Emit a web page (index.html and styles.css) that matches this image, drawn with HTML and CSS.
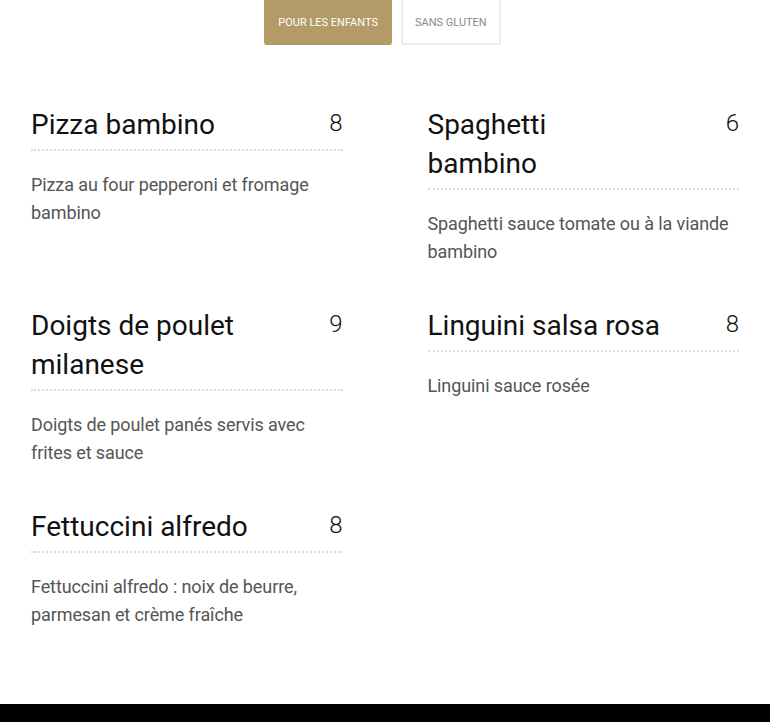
FILE: index.html
```html
<!DOCTYPE html>
<html>
<head>
    <title>Menu</title>
    <link rel="stylesheet" href="styles.css">
</head>
<body>
    <div class="tabs">
        <button class="tab tab-active">Pour les enfants</button>
        <button class="tab">Sans gluten</button>
    </div>

    <div class="menu">
        <div class="item">
            <div class="item-head">
                <h2 class="item-title">Pizza bambino</h2>
                <span class="item-price">8</span>
            </div>
            <p class="item-desc">Pizza au four pepperoni et fromage bambino</p>
        </div>
        <div class="item">
            <div class="item-head">
                <h2 class="item-title">Spaghetti bambino</h2>
                <span class="item-price">6</span>
            </div>
            <p class="item-desc">Spaghetti sauce tomate ou à la viande bambino</p>
        </div>
        <div class="item">
            <div class="item-head">
                <h2 class="item-title">Doigts de poulet milanese</h2>
                <span class="item-price">9</span>
            </div>
            <p class="item-desc">Doigts de poulet panés servis avec frites et sauce</p>
        </div>
        <div class="item">
            <div class="item-head">
                <h2 class="item-title">Linguini salsa rosa</h2>
                <span class="item-price">8</span>
            </div>
            <p class="item-desc">Linguini sauce rosée</p>
        </div>
        <div class="item">
            <div class="item-head">
                <h2 class="item-title">Fettuccini alfredo</h2>
                <span class="item-price">8</span>
            </div>
            <p class="item-desc">Fettuccini alfredo : noix de beurre, parmesan et crème fraîche</p>
        </div>
    </div>

    <footer class="footer"></footer>
</body>
</html>
```

FILE: styles.css
```css
body {
    margin: 0;
    font-family: Roboto, "Liberation Sans", sans-serif;
    background-color: white;
    color: #111;
}
.tabs {
    display: flex;
    justify-content: center;
    gap: 9px;
    padding-right: 5px;
    margin-top: -15px;
}
.tab {
    height: 60px;
    padding: 15px 12px 0 12px;
    border: 2px solid #ececec;
    border-radius: 3px;
    background-color: white;
    color: #8a8a8a;
    font-family: Roboto, "Liberation Sans", sans-serif;
    font-size: 11px;
    text-transform: uppercase;
    cursor: pointer;
}
.tab-active {
    background-color: #b39a66;
    border-color: #b39a66;
    color: white;
}
.menu {
    display: grid;
    grid-template-columns: 1fr 1fr;
    column-gap: 85px;
    row-gap: 40px;
    padding: 60px 31px 0 31px;
}
.item-head {
    display: flex;
    align-items: flex-start;
    justify-content: space-between;
    padding-bottom: 5px;
    border-bottom: 2px dotted #dcdcdc;
}
.item-title {
    width: 75%;
    margin: 0;
    font-size: 28px;
    font-weight: 400;
    line-height: 39px;
    color: #111;
}
.item-price {
    font-size: 24px;
    font-weight: 300;
    line-height: 36px;
    color: #111;
}
.item-desc {
    margin: 20px 0 0 0;
    font-size: 18px;
    line-height: 28px;
    letter-spacing: -0.1px;
    color: #555;
}
.footer {
    height: 60px;
    margin-top: 75px;
    background-color: black;
}
```
